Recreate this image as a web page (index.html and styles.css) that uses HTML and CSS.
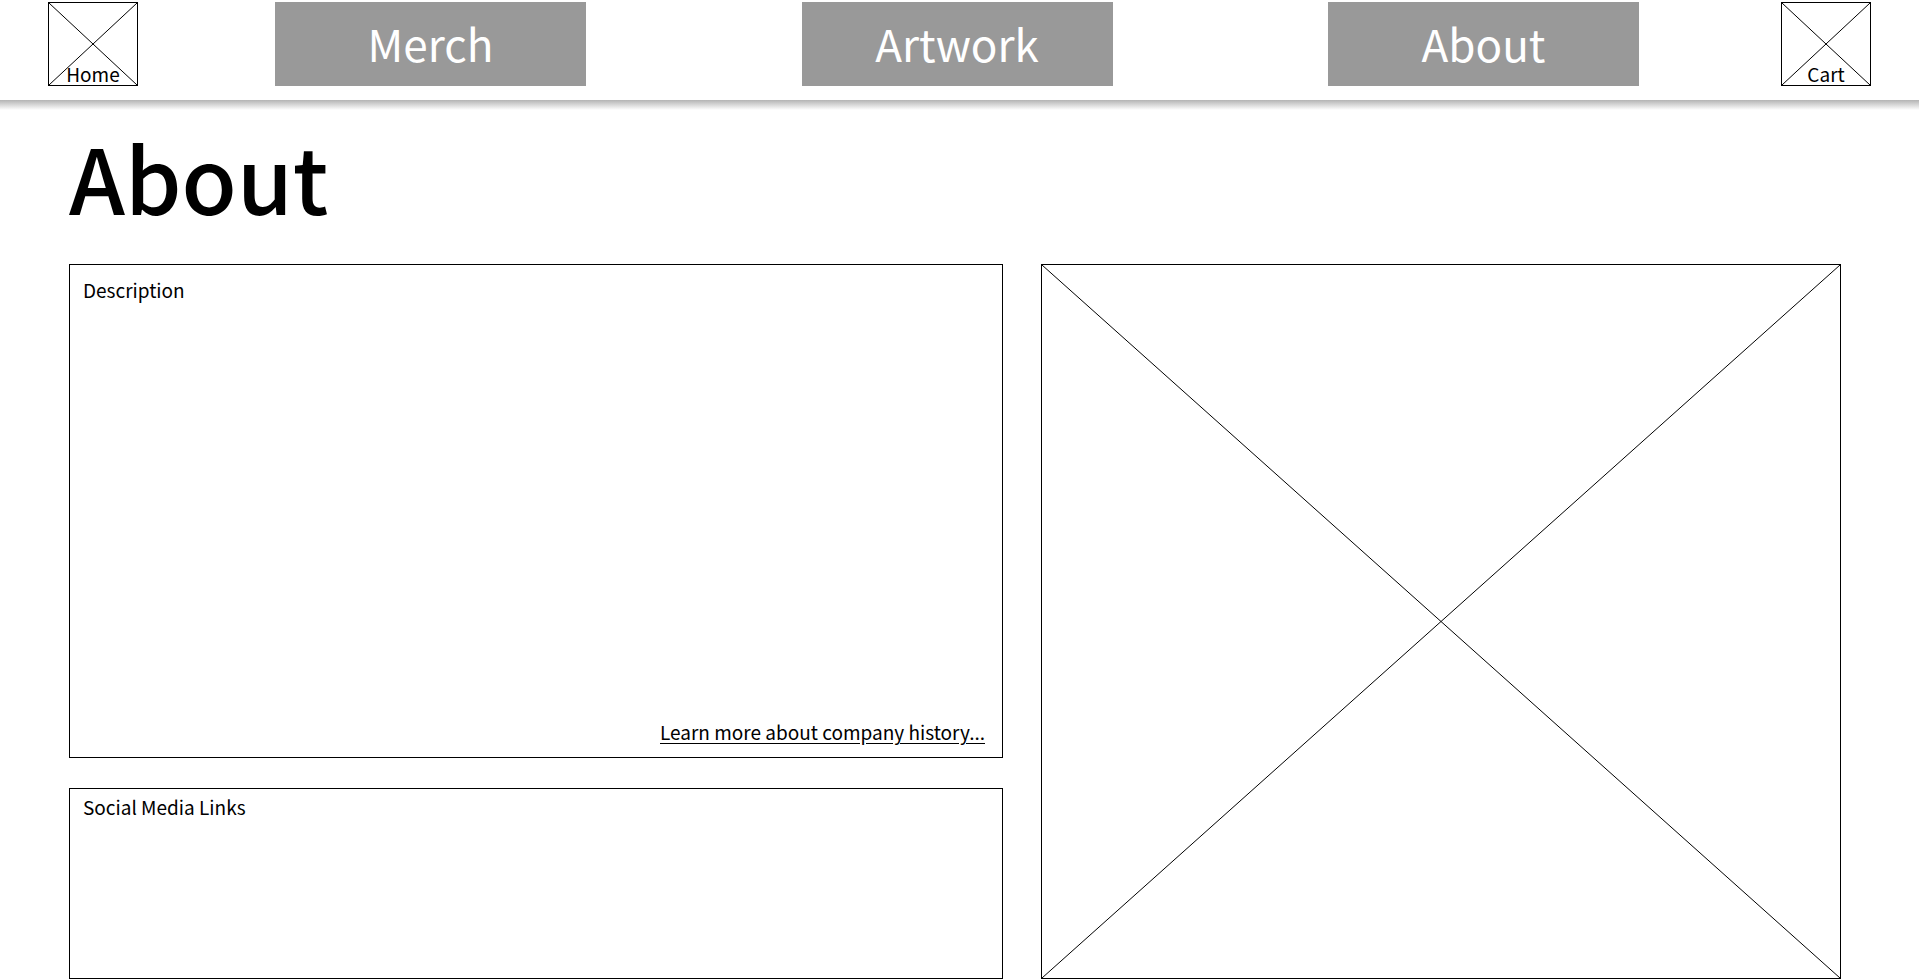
FILE: index.html
```html
<!DOCTYPE html>
<html lang="en">
<head>
<meta charset="utf-8">
<meta name="viewport" content="width=device-width, initial-scale=1">
<title>About</title>
<link rel="stylesheet" href="styles.css">
</head>
<body class="page">
<header class="header">
  <a class="icon-link" href="#home">
    <svg class="cross" viewBox="0 0 100 100" preserveAspectRatio="none" aria-hidden="true"><path d="M0 0L100 100M100 0L0 100"/></svg>
    <span class="icon-label">Home</span>
  </a>
  <nav class="nav">
    <a class="nav-link" href="#merch">Merch</a>
    <a class="nav-link" href="#artwork">Artwork</a>
    <a class="nav-link" href="#about">About</a>
  </nav>
  <a class="icon-link" href="#cart">
    <svg class="cross" viewBox="0 0 100 100" preserveAspectRatio="none" aria-hidden="true"><path d="M0 0L100 100M100 0L0 100"/></svg>
    <span class="icon-label">Cart</span>
  </a>
</header>
<main class="main">
  <h1 class="title">About</h1>
  <div class="content">
    <section class="panel description">
      <h2 class="panel-title">Description</h2>
      <a class="more" href="#history">Learn more about company history...</a>
    </section>
    <section class="panel social">
      <h2 class="panel-title">Social Media Links</h2>
    </section>
    <div class="picture">
      <svg class="cross" viewBox="0 0 100 100" preserveAspectRatio="none" aria-hidden="true"><path d="M0 0L100 100M100 0L0 100"/></svg>
    </div>
  </div>
</main>
</body>
</html>
```

FILE: styles.css
```css
* {
  box-sizing: border-box;
}

.page {
  display: flex;
  flex-direction: column;
  min-height: 100vh;
  margin: 0;
  background: #fff;
  color: #000;
  font-family: "Noto Sans CJK JP", "Noto Sans", sans-serif;
}

.header {
  display: flex;
  align-items: flex-start;
  height: 100px;
  padding: 2px 48px 0;
}

.icon-link {
  position: relative;
  display: flex;
  flex: none;
  align-items: flex-end;
  justify-content: center;
  width: 90px;
  height: 84px;
  border: 1px solid #000;
  color: #000;
  text-decoration: none;
}

.icon-label {
  position: relative;
  font-size: 19px;
  line-height: 22px;
}

.cross {
  position: absolute;
  inset: 0;
  width: 100%;
  height: 100%;
  fill: none;
  stroke: #000;
  stroke-width: 1px;
}

.cross path {
  vector-effect: non-scaling-stroke;
}

.nav {
  display: flex;
  flex: 1;
  justify-content: space-between;
  margin: 0 142px 0 137px;
}

.nav-link {
  width: 311px;
  height: 84px;
  background: #999;
  color: #fff;
  font-size: 44px;
  line-height: 82px;
  text-align: center;
  text-decoration: none;
}

.main {
  display: flex;
  flex: 1;
  flex-direction: column;
  padding: 0 78px 1px 69px;
  background: linear-gradient(#b4b4b4, #fff) top / 100% 10px no-repeat;
}

.title {
  margin: 16px 0 28px;
  font-size: 90px;
  font-weight: 500;
  line-height: 120px;
}

.content {
  display: grid;
  flex: 1;
  grid-template-columns: 934fr 800fr;
  grid-template-rows: 494fr 191fr;
  gap: 30px 38px;
}

.panel {
  display: flex;
  flex-direction: column;
  justify-content: space-between;
  border: 1px solid #000;
}

.description {
  padding: 11px 17px 11px 13px;
}

.social {
  padding: 4px 13px;
}

.panel-title {
  margin: 0;
  font-size: 19px;
  font-weight: 400;
  line-height: 28px;
}

.more {
  align-self: flex-end;
  color: #000;
  font-size: 19px;
  line-height: 28px;
  text-underline-offset: 3px;
}

.picture {
  position: relative;
  grid-column: 2;
  grid-row: 1 / 3;
  border: 1px solid #000;
}
```
